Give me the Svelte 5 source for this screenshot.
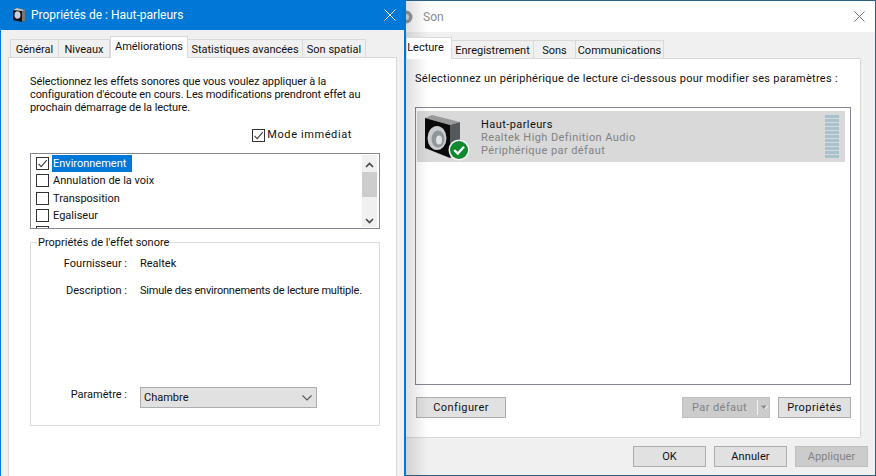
<script>
  const effects = [
    { name: 'Environnement', checked: true, selected: true },
    { name: 'Annulation de la voix' },
    { name: 'Transposition' },
    { name: 'Egaliseur' }
  ];
  const leftTabs = ['Général', 'Niveaux', 'Améliorations', 'Statistiques avancées', 'Son spatial'];
  const rightTabs = ['Lecture', 'Enregistrement', 'Sons', 'Communications'];
  const meter = Array.from({ length: 11 });
</script>

{#snippet check()}
  <svg class="tick" viewBox="0 0 13 13" width="13" height="13"><path d="M2.5 6.8 5.2 9.6 10.8 3.2" fill="none" stroke="#444" stroke-width="1.2"/></svg>
{/snippet}

<div class="desktop">
  <section class="win son">
    <header class="title light">
      <svg class="sicon" viewBox="0 0 16 16" width="16" height="16"><circle cx="6" cy="8" r="6.5" fill="#999"/><circle cx="6" cy="8" r="3" fill="#ddd"/></svg>
      <span class="ttext grey">Son</span>
      <svg class="close" viewBox="0 0 11 11" width="11" height="11"><path d="M.5.5 10.5 10.5M10.5.5.5 10.5" stroke="#777" fill="none"/></svg>
    </header>
    <div class="body">
      <nav class="tabs r">
        {#each rightTabs as t, i}
          <span class="tab r{i}" class:active={i === 0}>{t}</span>
        {/each}
      </nav>
      <div class="panel rpanel">
        <p class="lead">Sélectionnez un périphérique de lecture ci-dessous pour modifier ses paramètres :</p>
        <div class="devices">
          <div class="device">
            <svg class="speaker" viewBox="0 0 48 48" width="48" height="48">
              <path d="M2 4 9 1 37 8 27 11Z" fill="#9a9a9a"/>
              <path d="M27 11 37 8 37 41 27 44Z" fill="#55595c"/>
              <path d="M2 4 27 11 27 44 2 34Z" fill="#0a0a0a"/>
              <ellipse cx="14" cy="24" rx="9.5" ry="12" fill="#c9cdd0"/>
              <ellipse cx="15" cy="25" rx="6.5" ry="8.5" fill="#8f979b"/>
              <ellipse cx="16" cy="26" rx="3" ry="4.5" fill="#dfe3e5"/>
              <circle cx="36" cy="36" r="10.5" fill="#f3f3f3"/>
              <circle cx="36" cy="36" r="9" fill="#0f8a2e"/>
              <path d="M31.2 36 34.8 39.6 41 32.8" fill="none" stroke="#fff" stroke-width="2.3"/>
            </svg>
            <div class="dtext">
              <strong>Haut-parleurs</strong>
              <span>Realtek High Definition Audio</span>
              <span>Périphérique par défaut</span>
            </div>
            <div class="meter">
              {#each meter as _}<i></i>{/each}
            </div>
          </div>
        </div>
        <div class="row-actions">
          <button class="btn config">Configurer</button>
          <span class="grow"></span>
          <span class="split">
            <span class="sl">Par défaut</span>
            <i class="sep"></i>
            <svg viewBox="0 0 10 6" width="10" height="6"><path d="M0 0H10L5 6Z" fill="#8a8a8a"/><path d="M5 6 10 0 7 0 4 4Z" fill="#eee"/></svg>
          </span>
          <button class="btn props">Propriétés</button>
        </div>
      </div>
      <footer class="foot">
        <button class="btn fb">OK</button>
        <button class="btn fb">Annuler</button>
        <button class="btn fb off">Appliquer</button>
      </footer>
    </div>
    <div class="shade"></div>
  </section>

  <section class="win props-win">
    <header class="title blue">
      <svg class="sicon" viewBox="0 0 14 14" width="14" height="14">
        <path d="M1 2 5 0 13 2 13 13 10 14 1 12Z" fill="#111"/>
        <path d="M10 3 13 2 13 13 10 14Z" fill="#777"/>
        <path d="M1 2 5 0 13 2 10 3Z" fill="#ccc"/>
        <ellipse cx="5.5" cy="7" rx="3" ry="3.8" fill="#ccd"/>
      </svg>
      <span class="ttext">Propriétés de : Haut-parleurs</span>
      <svg class="close" viewBox="0 0 12 12" width="12" height="12"><path d="M.5.5 11.5 11.5M11.5.5.5 11.5" stroke="#fff" fill="none"/></svg>
    </header>
    <div class="body">
      <nav class="tabs l">
        {#each leftTabs as t, i}
          <span class="tab l{i}" class:active={i === 2}>{t}</span>
        {/each}
      </nav>
      <div class="panel lpanel">
        <p class="intro">Sélectionnez les effets sonores que vous voulez appliquer à la configuration d'écoute en cours. Les modifications prendront effet au prochain démarrage de la lecture.</p>
        <div class="mode">
          <span class="box">{@render check()}</span>
          <span>Mode immédiat</span>
        </div>
        <div class="list">
          <ul>
            {#each effects as e}
              <li>
                <span class="box">{#if e.checked}{@render check()}{/if}</span>
                <span class="lbl" class:sel={e.selected}>{e.name}</span>
              </li>
            {/each}
            <li class="cut"><span class="box"></span></li>
          </ul>
          <div class="scroll">
            <svg viewBox="0 0 9 6" width="9" height="6"><path d="M1 5 4.5 1.5 8 5" fill="none" stroke="#444" stroke-width="1.6"/></svg>
            <div class="thumb"></div>
            <svg class="down" viewBox="0 0 9 6" width="9" height="6"><path d="M1 1 4.5 4.5 8 1" fill="none" stroke="#444" stroke-width="1.6"/></svg>
          </div>
        </div>
        <fieldset>
          <legend>Propriétés de l'effet sonore</legend>
          <div class="prop first"><span class="k">Fournisseur :</span><span>Realtek</span></div>
          <div class="prop"><span class="k">Description :</span><span class="v">Simule des environnements de lecture multiple.</span></div>
          <div class="prop param">
            <span class="k">Paramètre :</span>
            <div class="select">
              <span>Chambre</span>
              <svg viewBox="0 0 10 6" width="10" height="6"><path d="M.5.5 5 5 9.5.5" fill="none" stroke="#555" stroke-width="1.1"/></svg>
            </div>
          </div>
        </fieldset>
      </div>
    </div>
  </section>
</div>

<style>
  :global(body) { margin: 0; background: #fff; }
  .desktop {
    position: relative; width: 876px; height: 476px; overflow: hidden;
    font: 11px/16px Roboto, "Open Sans", sans-serif; color: #111;
  }
  .win { position: absolute; top: 0; display: flex; flex-direction: column; box-sizing: border-box; }
  .props-win { left: 0; width: 406px; height: 476px; border: 1px solid #0078d7; border-width: 0 2px 0 1px; }
  .son { left: 400px; width: 476px; height: 476px; border: 1px solid #2a5f85; border-left: 0; }
  .title { height: 30px; display: flex; align-items: center; flex: none; padding-left: 11px; padding-right: 8px; gap: 5px; }
  .blue { background: #0078d7; color: #fff; }
  .light { background: #fff; height: 31px; padding-left: 0; padding-right: 10px; }
  .sicon { flex: none; }
  .ttext { font-size: 12px; flex: 1; }
  .grey { color: #8c8c8c; font-size: 12px; padding-left: 2px; }
  .close { flex: none; }
  .body { background: #f0f0f0; flex: 1; display: flex; flex-direction: column; min-height: 0; }
  .tabs { display: flex; align-items: flex-end; height: 28px; flex: none; position: relative; z-index: 1; }
  .tabs.l { padding-left: 9px; }
  .tabs.r { padding-left: 6px; height: 27px; }
  .tab {
    height: 18px; box-sizing: border-box; border: 1px solid #d9d9d9; border-bottom: 0; border-left: 0;
    background: #f0f0f0; text-align: center; line-height: 19px; white-space: nowrap; margin-bottom: 1px;
  }
  .tab:first-child { border-left: 1px solid #d9d9d9; }
  .tab.active { height: 22px; background: #fff; margin-bottom: 0; border-left: 1px solid #d9d9d9; line-height: 19px; }
  .l0 { width: 49px; } .l1 { width: 51px; } .l2 { width: 78px; } .l3 { width: 115px; } .l4 { width: 63px; }
  .r0 { width: 46px; padding-right: 7px; } .r1 { width: 82px; } .r2 { width: 42px; } .r3 { width: 88px; }
  .panel { background: #fff; border: 1px solid #d9d9d9; box-sizing: border-box; }
  .lpanel { margin: -1px 7px 0 7px; flex: 1; padding: 17px 16px 0 21px; border-bottom: 0; }
  .intro { margin: 0; width: 335px; line-height: 13px; letter-spacing: -.1px; }
  .mode { display: flex; align-items: center; gap: 2px; justify-content: flex-end; margin: 13px 28px 0 0; height: 16px; letter-spacing: .6px; }
  .box { width: 13px; height: 13px; border: 1px solid #333; box-sizing: border-box; background: #fff; display: inline-block; position: relative; flex: none; }
  .tick { position: absolute; left: -1px; top: -1px; }
  .list { margin-top: 10px; height: 76px; border: 1px solid #828790; box-sizing: border-box; display: flex; background: #fff; overflow: hidden; }
  ul { list-style: none; margin: 0; padding: 1px 0 0 5px; flex: 1; }
  li { height: 17.3px; display: flex; align-items: center; gap: 3px; flex: none; }
  .lbl { padding: 0 6px 0 1px; height: 17px; line-height: 17px; }
  .sel { background: #0078d7; color: #fff; width: 73px; }
  .scroll { width: 15px; margin: 1px 2px 1px 0; background: #f0f0f0; display: flex; flex-direction: column; align-items: center; padding-top: 7px; box-sizing: border-box; }
  .thumb { width: 100%; height: 25px; background: #cdcdcd; margin-top: 4px; }
  .down { margin-top: 21px; }
  fieldset { margin: 7px 0 0; padding: 0; height: 190px; border: 1px solid #dcdcdc; box-sizing: border-box; position: relative; }
  legend { margin-left: 6px; padding: 0 1px; line-height: 13px; }
  .prop { display: flex; gap: 13px; height: 16px; }
  .prop .k { width: 96px; text-align: right; flex: none; }
  .v { letter-spacing: -.2px; }
  .first { margin-top: 7px; }
  .prop + .prop { margin-top: 11px; }
  .prop.param { margin-top: 88px; height: 21px; align-items: flex-start; }
  .select { width: 177px; height: 21px; box-sizing: border-box; background: #e1e1e1; border: 1px solid #adadad; display: flex; align-items: center; justify-content: space-between; padding: 1px 4px 0 3px; }
  .rpanel { margin: -1px 14px 0 6px; height: 380px; padding: 13px 9px 0 9px; flex: none; border-left: 0; }
  .lead { margin: 0; letter-spacing: .28px; line-height: 14px; white-space: nowrap; }
  .devices { margin-top: 21px; height: 278px; border: 1px solid #828790; box-sizing: border-box; padding: 3px 5px 0 1px; }
  .device { height: 51px; background: #d9d9d9; display: flex; align-items: center; padding-left: 6px; box-sizing: border-box; }
  .speaker { flex: none; margin-top: 3px; }
  .dtext { margin-left: 10px; display: flex; flex-direction: column; line-height: 13px; color: #828282; letter-spacing: .42px; flex: 1; padding-top: 1px; }
  .dtext strong { font-weight: 400; color: #111; }
  .meter { width: 14px; margin-right: 6px; display: flex; flex-direction: column; gap: 1px; }
  .meter i { height: 3px; background: #a5c4cb; }
  .row-actions { display: flex; margin-top: 12px; }
  .grow { flex: 1; }
  .btn {
    font: inherit; color: #111; background: #e1e1e1; border: 1px solid #adadad; padding: 0;
    height: 21px; line-height: 17px; letter-spacing: .42px;
  }
  .config { width: 90px; margin-left: 1px; }
  .props { width: 73px; margin-left: 8px; }
  .split {
    width: 88px; height: 21px; box-sizing: border-box; background: #ccc; border: 1px solid #bfbfbf; color: #838383;
    display: flex; align-items: center; padding-left: 9px; letter-spacing: .42px;
  }
  .sl { white-space: nowrap; }
  .sep { width: 1px; height: 15px; background: #f2f2f2; margin-left: 10px; margin-right: 3px; flex: none; }
  .foot { display: flex; justify-content: flex-end; gap: 8px; padding: 8px 7px 0 0; }
  .fb { width: 73px; letter-spacing: .1px; }
  .off { background: #ccc; border-color: #bfbfbf; color: #838383; }
  .shade { position: absolute; left: 6px; top: 0; bottom: 0; width: 22px; background: linear-gradient(to right, rgba(0,0,0,.13), rgba(0,0,0,0)); pointer-events: none; }
</style>
